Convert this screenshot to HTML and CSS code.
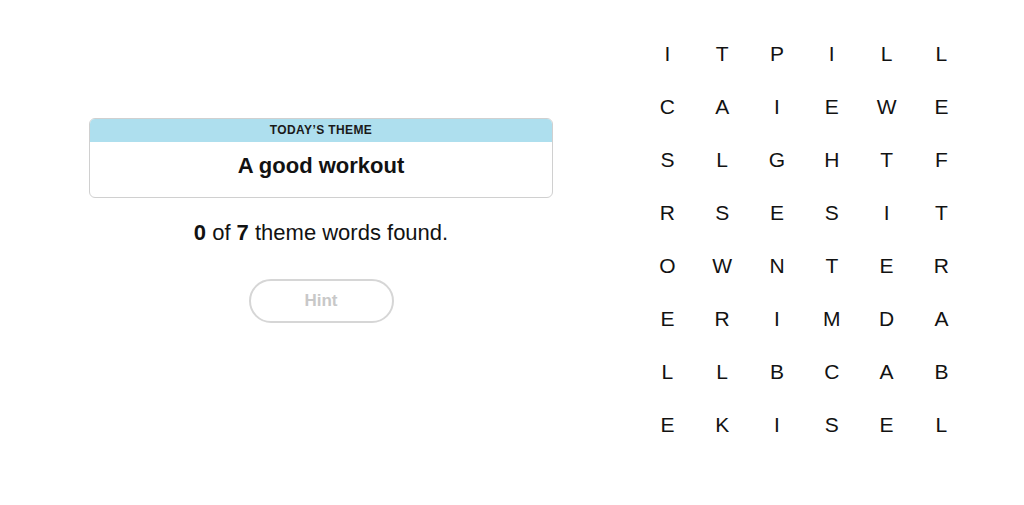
FILE: index.html
```html
<!DOCTYPE html>
<html lang="en">
<head>
    <meta charset="UTF-8">
    <meta name="viewport" content="width=device-width, initial-scale=1.0">
    <title>Strands</title>
    <link rel="stylesheet" href="styles.css">
</head>
<body>
    <div class="game">
        <div class="side">
            <div class="theme">
                <div class="theme-head">TODAY’S THEME</div>
                <div class="theme-body">A good workout</div>
            </div>
            <p class="count"><b>0</b> of <b>7</b> theme words found.</p>
            <button class="hint" disabled>Hint</button>
        </div>
        <div class="board">
            <span>I</span><span>T</span><span>P</span><span>I</span><span>L</span><span>L</span>
            <span>C</span><span>A</span><span>I</span><span>E</span><span>W</span><span>E</span>
            <span>S</span><span>L</span><span>G</span><span>H</span><span>T</span><span>F</span>
            <span>R</span><span>S</span><span>E</span><span>S</span><span>I</span><span>T</span>
            <span>O</span><span>W</span><span>N</span><span>T</span><span>E</span><span>R</span>
            <span>E</span><span>R</span><span>I</span><span>M</span><span>D</span><span>A</span>
            <span>L</span><span>L</span><span>B</span><span>C</span><span>A</span><span>B</span>
            <span>E</span><span>K</span><span>I</span><span>S</span><span>E</span><span>L</span>
        </div>
    </div>
</body>
</html>
```

FILE: styles.css
```css
body{
    margin: 0;
    background: #fff;
    color: #121212;
    font-family: "Liberation Sans", Arial, sans-serif;
}
.game{
    display: flex;
    height: 505px;
}
.side{
    width: 642px;
    display: flex;
    flex-direction: column;
    align-items: center;
    padding-top: 118px;
}
.theme{
    width: 464px;
    border: 1px solid #d0d0d0;
    border-radius: 6px;
    overflow: hidden;
    box-sizing: border-box;
}
.theme-head{
    background: #aedfee;
    height: 23px;
    line-height: 23px;
    text-align: center;
    font-size: 12px;
    font-weight: bold;
    letter-spacing: 0.4px;
    color: #1a1a1a;
}
.theme-body{
    height: 55px;
    line-height: 48px;
    text-align: center;
    font-size: 22px;
    font-weight: bold;
    letter-spacing: 0;
}
.count{
    margin: 21px 0 0;
    font-size: 22px;
    line-height: 28px;
}
.hint{
    margin-top: 32px;
    width: 145px;
    height: 44px;
    border: 2px solid #d6d6d6;
    border-radius: 22px;
    background: #fff;
    color: #c8c8c8;
    font-family: inherit;
    font-size: 17px;
    font-weight: bold;
}
.board{
    display: grid;
    grid-template-columns: repeat(6, 54.8px);
    grid-auto-rows: 53px;
    padding-top: 27px;
    margin-left: -2px;
}
.board span{
    display: flex;
    align-items: center;
    justify-content: center;
    font-size: 21px;
}
```
